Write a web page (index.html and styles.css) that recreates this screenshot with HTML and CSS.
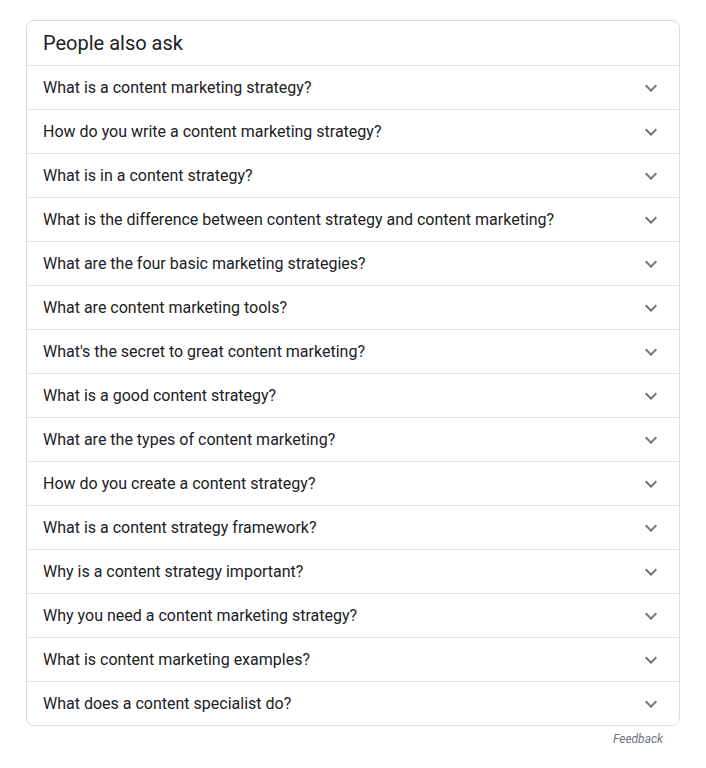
FILE: index.html
```html
<!DOCTYPE html>
<html>
<head>
<meta charset="utf-8">
<link rel="stylesheet" href="styles.css">
</head>
<body>
<div class="wrap">
  <div class="card">
    <div class="title">People also ask</div>
    <div class="row"><span>What is a content marketing strategy?</span><svg class="chev" viewBox="0 0 24 24"><path d="M16.59 8.59L12 13.17 7.41 8.59 6 10l6 6 6-6z"/></svg></div>
    <div class="row"><span>How do you write a content marketing strategy?</span><svg class="chev" viewBox="0 0 24 24"><path d="M16.59 8.59L12 13.17 7.41 8.59 6 10l6 6 6-6z"/></svg></div>
    <div class="row"><span>What is in a content strategy?</span><svg class="chev" viewBox="0 0 24 24"><path d="M16.59 8.59L12 13.17 7.41 8.59 6 10l6 6 6-6z"/></svg></div>
    <div class="row"><span>What is the difference between content strategy and content marketing?</span><svg class="chev" viewBox="0 0 24 24"><path d="M16.59 8.59L12 13.17 7.41 8.59 6 10l6 6 6-6z"/></svg></div>
    <div class="row"><span>What are the four basic marketing strategies?</span><svg class="chev" viewBox="0 0 24 24"><path d="M16.59 8.59L12 13.17 7.41 8.59 6 10l6 6 6-6z"/></svg></div>
    <div class="row"><span>What are content marketing tools?</span><svg class="chev" viewBox="0 0 24 24"><path d="M16.59 8.59L12 13.17 7.41 8.59 6 10l6 6 6-6z"/></svg></div>
    <div class="row"><span>What's the secret to great content marketing?</span><svg class="chev" viewBox="0 0 24 24"><path d="M16.59 8.59L12 13.17 7.41 8.59 6 10l6 6 6-6z"/></svg></div>
    <div class="row"><span>What is a good content strategy?</span><svg class="chev" viewBox="0 0 24 24"><path d="M16.59 8.59L12 13.17 7.41 8.59 6 10l6 6 6-6z"/></svg></div>
    <div class="row"><span>What are the types of content marketing?</span><svg class="chev" viewBox="0 0 24 24"><path d="M16.59 8.59L12 13.17 7.41 8.59 6 10l6 6 6-6z"/></svg></div>
    <div class="row"><span>How do you create a content strategy?</span><svg class="chev" viewBox="0 0 24 24"><path d="M16.59 8.59L12 13.17 7.41 8.59 6 10l6 6 6-6z"/></svg></div>
    <div class="row"><span>What is a content strategy framework?</span><svg class="chev" viewBox="0 0 24 24"><path d="M16.59 8.59L12 13.17 7.41 8.59 6 10l6 6 6-6z"/></svg></div>
    <div class="row"><span>Why is a content strategy important?</span><svg class="chev" viewBox="0 0 24 24"><path d="M16.59 8.59L12 13.17 7.41 8.59 6 10l6 6 6-6z"/></svg></div>
    <div class="row"><span>Why you need a content marketing strategy?</span><svg class="chev" viewBox="0 0 24 24"><path d="M16.59 8.59L12 13.17 7.41 8.59 6 10l6 6 6-6z"/></svg></div>
    <div class="row"><span>What is content marketing examples?</span><svg class="chev" viewBox="0 0 24 24"><path d="M16.59 8.59L12 13.17 7.41 8.59 6 10l6 6 6-6z"/></svg></div>
    <div class="row"><span>What does a content specialist do?</span><svg class="chev" viewBox="0 0 24 24"><path d="M16.59 8.59L12 13.17 7.41 8.59 6 10l6 6 6-6z"/></svg></div>
  </div>
  <div class="feedback">Feedback</div>
</div>
</body>
</html>
```
FILE: styles.css
```css
html, body {
  margin: 0;
  padding: 0;
  background: #fff;
}
body {
  font-family: Roboto, "Liberation Sans", Arial, sans-serif;
  color: #202124;
}
.wrap {
  padding: 20px 26px 0 26px;
  width: 654px;
}
.card {
  border: 1px solid #dadce0;
  border-radius: 8px;
}
.title {
  height: 44px;
  display: flex;
  align-items: center;
  padding: 0 16px;
  font-size: 20px;
  line-height: 24px;
  color: #202124;
}
.row {
  height: 43px;
  border-top: 1px solid #e4e5e7;
  display: flex;
  align-items: center;
  justify-content: space-between;
  padding: 0 16px;
  font-size: 16px;
  line-height: 20px;
}
.chev {
  width: 24px;
  height: 24px;
  fill: #70757a;
  flex: none;
}
.feedback {
  text-align: right;
  font-style: italic;
  font-size: 12px;
  line-height: 24px;
  color: #70757a;
  padding-right: 17px;
  margin-top: 1px;
}
```
